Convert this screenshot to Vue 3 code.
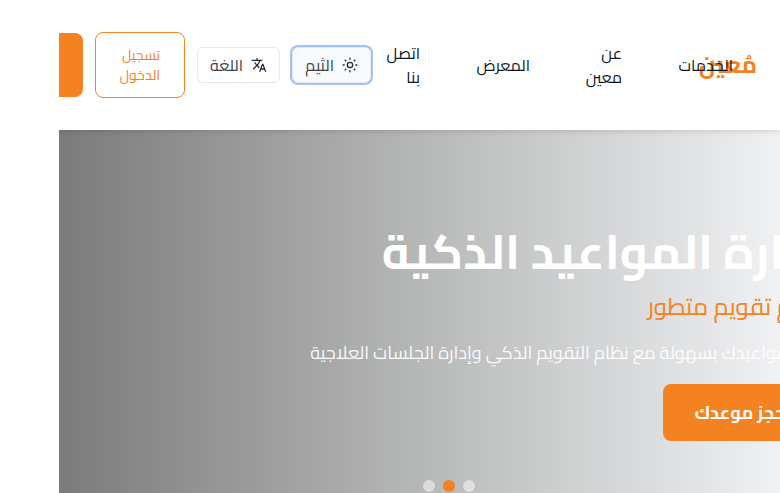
<script setup>
const links = [
  { label: 'الخدمات', size: 'w-services' },
  { label: 'عن معين', size: 'w-about' },
  { label: 'المعرض', size: 'w-gallery' },
  { label: 'اتصل بنا', size: 'w-contact' },
]
const slides = [false, true, false]
</script>

<template>
  <div class="page" dir="rtl">
    <header class="header">
      <div class="brand">مُعين</div>
      <nav class="nav">
        <a v-for="link in links" :key="link.label" :class="link.size">{{ link.label }}</a>
      </nav>
      <button class="tool focused">
        <svg width="16" height="16" viewBox="0 0 24 24" fill="none" stroke="currentColor" stroke-width="2">
          <circle cx="12" cy="12" r="4" />
          <path d="M12 1v3M12 20v3M1 12h3M20 12h3M4.2 4.2l2.1 2.1M17.7 17.7l2.1 2.1M4.2 19.8l2.1-2.1M17.7 6.3l2.1-2.1" />
        </svg>
        <span>الثيم</span>
      </button>
      <button class="tool">
        <svg width="16" height="16" viewBox="0 0 24 24" fill="currentColor">
          <path d="M12.87 15.07l-2.54-2.51.03-.03A17.52 17.52 0 0 0 14.07 6H17V4h-7V2H8v2H1v1.99h11.17C11.5 7.92 10.44 9.75 9 11.35 8.07 10.32 7.3 9.19 6.69 8h-2c.73 1.63 1.73 3.17 2.98 4.56l-5.09 5.02L4 19l5-5 3.11 3.11.76-2.04zM18.5 10h-2L12 22h2l1.12-3h4.75L21 22h2l-4.5-12zm-2.62 7l1.62-4.33L19.12 17h-3.24z" />
        </svg>
        <span>اللغة</span>
      </button>
      <button class="login">تسجيل الدخول</button>
      <button class="cta"></button>
    </header>
    <main class="hero">
      <div class="content">
        <h1>إدارة المواعيد الذكية</h1>
        <h2>نظام تقويم متطور</h2>
        <p>نظم مواعيدك بسهولة مع نظام التقويم الذكي وإدارة الجلسات العلاجية</p>
        <button class="book">احجز موعدك</button>
      </div>
      <div class="dots">
        <i v-for="(active, n) in slides" :key="n" :class="{ active }"></i>
      </div>
    </main>
  </div>
</template>

<style>
body { background: #fff; overflow: hidden; }
</style>
<style scoped>
* { box-sizing: border-box; }
.page { margin-left: 59px; width: 721px; height: 493px; overflow: hidden; display: flex; flex-direction: column; font-family: Cairo, "Noto Sans", sans-serif; }
button { font-family: inherit; margin: 0; border: 0; flex: none; }
svg { color: #1f2937; flex: none; }
.header { height: 130px; flex: none; display: flex; align-items: center; padding-right: 23px; background: #fff; box-shadow: 0 1px 6px rgba(0,0,0,.14); position: relative; z-index: 1; }
.brand { flex: none; width: 58px; font-size: 24px; font-weight: 700; line-height: 36px; color: #f58220; white-space: nowrap; }
.nav { flex: none; display: flex; align-items: center; gap: 56px; margin-right: -34px; font-size: 16px; line-height: 24px; font-weight: 400; color: #0f172a; }
.w-services { width: 55px; white-space: nowrap; }
.w-about { width: 36px; }
.w-gallery { width: 54px; white-space: nowrap; }
.w-contact { width: 34px; }
.tool { height: 36px; width: 83px; display: flex; align-items: center; gap: 8px; padding: 0 12px; border: 1px solid #e5e7eb; border-radius: 6px; background: #fff; color: #374151; font-size: 16px; line-height: 24px; margin-right: 12px; white-space: nowrap; }
.tool.focused { width: 79px; background: #f9fafb; margin-right: 15px; box-shadow: 0 0 0 2px #a0c1fb; }
.login { width: 90px; height: 66px; margin-right: 12px; border: 1px solid #f58220; border-radius: 8px; background: #fff; color: #f58220; font-size: 14px; line-height: 20px; padding: 0 24px; text-align: right; }
.cta { width: 90px; height: 64px; margin-right: 12px; border-radius: 8px; background: #f58220; }
.hero { flex: 1; position: relative; background: linear-gradient(90deg, #7a7b7a 0, #7e7f7e 24px, #b0b2b1 45%, #d1d2d3 73%, #f0f1f3 100%); }
.content { margin-right: -43px; padding-top: 91px; display: flex; flex-direction: column; align-items: flex-start; white-space: nowrap; color: #fff; }
h1 { margin: 0; font-size: 48px; line-height: 60px; font-weight: 700; }
h2 { margin: 8px 0 0; font-size: 24px; line-height: 36px; font-weight: 400; color: #f58220; }
p { margin: 14px 1px 0 0; font-size: 18px; line-height: 28px; color: rgba(255,255,255,.95); }
.book { margin-top: 17px; height: 57px; padding: 0 32px; border-radius: 8px; background: #f58220; color: #fff; font-size: 18px; font-weight: 700; }
.dots { position: absolute; left: 364px; top: 350px; display: flex; gap: 8px; }
.dots i { width: 12px; height: 12px; border-radius: 50%; background: rgba(255,255,255,.5); }
.dots .active { background: #f58220; }
</style>
